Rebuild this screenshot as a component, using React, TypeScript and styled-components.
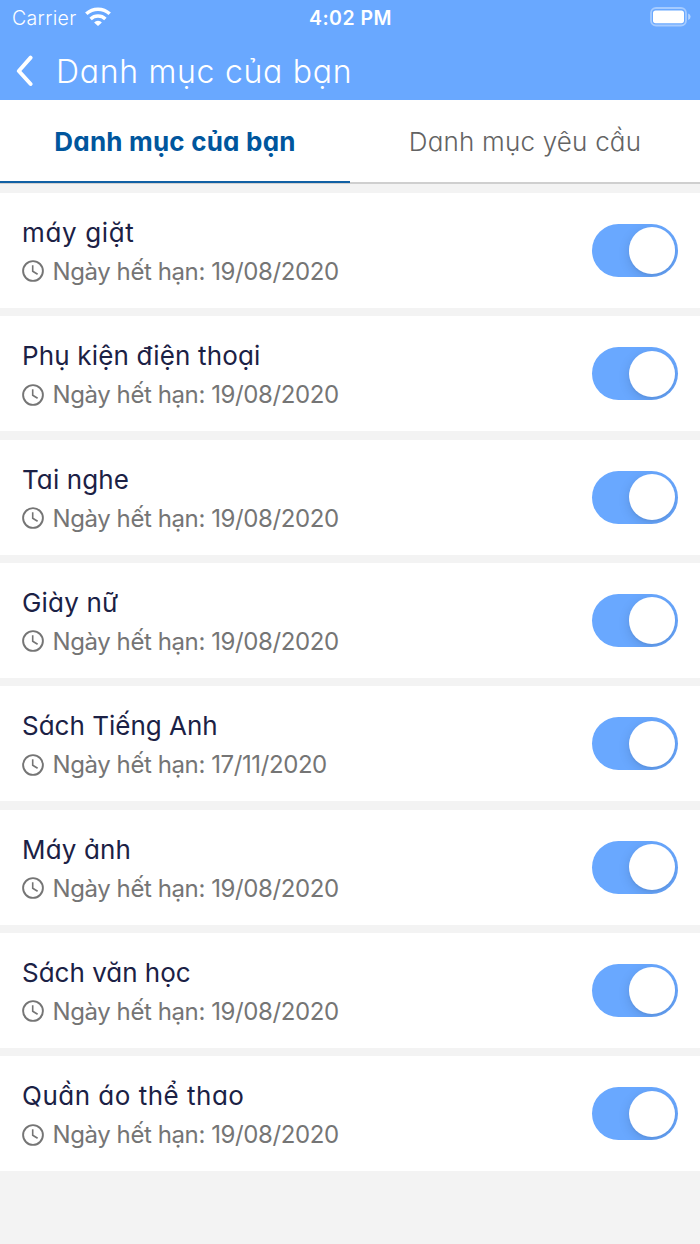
import React from 'react';
import styled, { createGlobalStyle } from 'styled-components';

const GlobalStyle = createGlobalStyle`
  * { box-sizing: border-box; }
  body {
    margin: 0;
    background: #f3f3f3;
    font-family: Inter, "Liberation Sans", sans-serif;
  }
`;

const Screen = styled.div`
  width: 700px;
  height: 1244px;
  overflow: hidden;
  background: #f3f3f3;
`;

const Header = styled.header`
  height: 99.6px;
  background: #69a8ff;
  color: #fff;
`;

const StatusBar = styled.div`
  display: grid;
  grid-template-columns: 1fr auto 1fr;
  align-items: center;
  height: 36px;
  padding: 0 9px 0 12px;
  font-size: 19.5px;
  line-height: 36px;
`;

const Carrier = styled.div`
  display: flex;
  align-items: center;
  gap: 8px;
  font-weight: 350;
  letter-spacing: 0.35px;
  svg { margin-top: -3px; }
`;

const Clock = styled.div`
  margin-left: -2px;
  font-weight: 600;
  letter-spacing: 0.5px;
`;

const Battery = styled.svg`
  justify-self: end;
  margin-top: -2px;
`;

const NavBar = styled.div`
  display: flex;
  align-items: center;
  height: 64px;
  padding: 7px 0 0 16px;
`;

const BackIcon = styled.svg`
  margin: 0 22px 2px 0;
`;

const Title = styled.h1<{ $spacing: number }>`
  margin: 0;
  font-size: 32px;
  font-weight: 340;
  line-height: 42px;
  white-space: nowrap;
  font-feature-settings: "cv11";
  letter-spacing: ${(p) => p.$spacing}px;
`;

const Tabs = styled.nav`
  display: flex;
  height: 84.4px;
  background: #fff;
  border-bottom: 2px solid #cfcfcf;
`;

const Tab = styled.button<{ $active?: boolean; $spacing: number }>`
  flex: 1;
  height: 83.4px;
  margin: 0;
  padding: 3px 0 0;
  border: 0;
  border-bottom: 2px solid ${(p) => (p.$active ? '#1060a4' : 'transparent')};
  background: none;
  color: ${(p) => (p.$active ? '#00569d' : '#636363')};
  font-family: inherit;
  font-size: 26px;
  font-weight: ${(p) => (p.$active ? 650 : 300)};
  font-feature-settings: "cv11";
  letter-spacing: ${(p) => p.$spacing}px;
  white-space: nowrap;
`;

const List = styled.main`
  display: flex;
  flex-direction: column;
  gap: 8.33px;
  padding-top: 9px;
`;

const Row = styled.section`
  display: flex;
  align-items: center;
  justify-content: space-between;
  height: 115px;
  padding: 0 22px;
  background: #fff;
`;

const Details = styled.div`
  padding-top: 4px;
`;

const Name = styled.div<{ $spacing: number }>`
  color: #1b2145;
  font-size: 26px;
  font-weight: 400;
  line-height: 38px;
  white-space: nowrap;
  font-feature-settings: "cv11";
  letter-spacing: ${(p) => p.$spacing}px;
`;

const Expiry = styled.div`
  display: flex;
  align-items: center;
  gap: 8.5px;
  height: 39px;
  color: #757575;
  font-size: 24px;
  font-weight: 380;
  letter-spacing: -0.41px;
  white-space: nowrap;
`;

const Switch = styled.button`
  display: flex;
  justify-content: flex-end;
  align-items: center;
  width: 86.5px;
  height: 53px;
  padding: 0 3px;
  border: 0;
  border-radius: 27px;
  overflow: hidden;
  background: #69a8ff;
`;

const Knob = styled.span`
  width: 46.5px;
  height: 46.5px;
  border-radius: 50%;
  background: #fff;
  box-shadow: 0 3px 12px rgba(0, 0, 0, 0.13), 0 2px 2px rgba(0, 0, 0, 0.04);
`;

const items = [
  { name: 'máy giặt', date: '19/08/2020', spacing: 0.65 },
  { name: 'Phụ kiện điện thoại', date: '19/08/2020', spacing: 0.15 },
  { name: 'Tai nghe', date: '19/08/2020', spacing: 0.12 },
  { name: 'Giày nữ', date: '19/08/2020', spacing: 0.2 },
  { name: 'Sách Tiếng Anh', date: '17/11/2020', spacing: 0 },
  { name: 'Máy ảnh', date: '19/08/2020', spacing: 0.15 },
  { name: 'Sách văn học', date: '19/08/2020', spacing: 0 },
  { name: 'Quần áo thể thao', date: '19/08/2020', spacing: 0.5 },
];

const WifiIcon = () => (
  <svg width="26" height="19" viewBox="0 0 26 19" fill="none" stroke="#fff" strokeWidth="3.5">
    <path d="M1.3 6.8 A17 17 0 0 1 24.7 6.8" />
    <path d="M5.6 11.9 A10.8 10.8 0 0 1 20.4 11.9" />
    <path d="M13 19 L9.1 15.4 A5.5 5.5 0 0 1 16.9 15.4 Z" fill="#fff" stroke="none" />
  </svg>
);

const ClockIcon = () => (
  <svg width="22" height="22" viewBox="0 0 22 22" fill="none" stroke="#757575">
    <circle cx="11" cy="11" r="9.9" strokeWidth="1.9" />
    <path d="M10.7 5.2 V11.2 L15.6 14.2" strokeWidth="1.6" />
  </svg>
);

export default function App() {
  return (
    <Screen>
      <GlobalStyle />
      <Header>
        <StatusBar>
          <Carrier>
            <span>Carrier</span>
            <WifiIcon />
          </Carrier>
          <Clock>4:02 PM</Clock>
          <Battery width="41" height="20" viewBox="0 0 41 20">
            <rect x="1" y="1" width="35" height="17.5" rx="5" fill="none" stroke="#fff" strokeOpacity="0.4" strokeWidth="1.8" />
            <rect x="3" y="3.4" width="31" height="12.8" rx="2.7" fill="#fff" />
            <path d="M38.2 6.5 Q40.6 7.5 40.6 9.8 Q40.6 12 38.2 13 Z" fill="#fff" fillOpacity="0.5" />
          </Battery>
        </StatusBar>
        <NavBar>
          <BackIcon width="18" height="32" viewBox="0 0 18 32" fill="none" stroke="#fff" strokeWidth="3.9" strokeLinecap="round" strokeLinejoin="round">
            <path d="M14.6 2.6 L2.8 16 L14.6 29" />
          </BackIcon>
          <Title $spacing={0.7}>Danh mục của bạn</Title>
        </NavBar>
      </Header>
      <Tabs>
        <Tab $active $spacing={0.2}>Danh mục của bạn</Tab>
        <Tab $spacing={0.2}>Danh mục yêu cầu</Tab>
      </Tabs>
      <List>
        {items.map((item) => (
          <Row key={item.name}>
            <Details>
              <Name $spacing={item.spacing}>{item.name}</Name>
              <Expiry>
                <ClockIcon />
                <span>Ngày hết hạn: {item.date}</span>
              </Expiry>
            </Details>
            <Switch role="switch" aria-checked="true" aria-label={item.name}>
              <Knob />
            </Switch>
          </Row>
        ))}
      </List>
    </Screen>
  );
}
